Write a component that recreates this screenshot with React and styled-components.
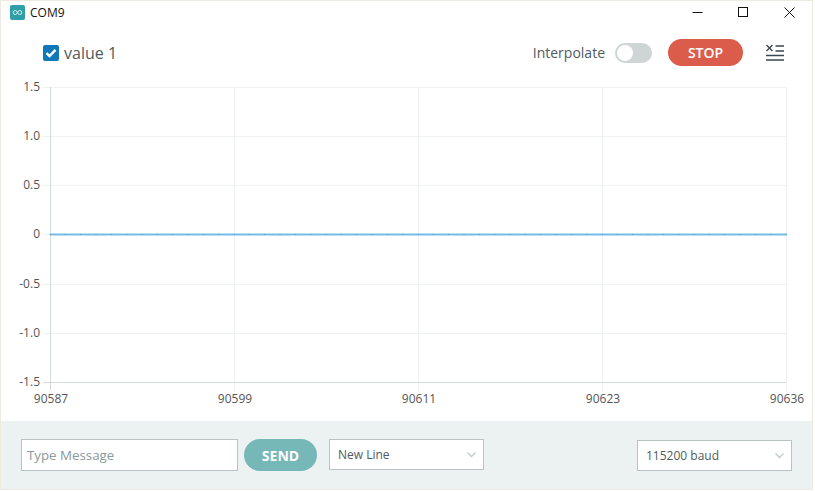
import React from "react";
import styled, { createGlobalStyle } from "styled-components";

const Global = createGlobalStyle`
  html, body { margin: 0; padding: 0; background: #fff; }
  body { font-family: "Open Sans", "Liberation Sans", sans-serif; width: 815px; height: 491px; overflow: hidden; }
  * { box-sizing: border-box; }
`;

const Win = styled.div`
  width: 813px;
  height: 490px;
  border: 1px solid #ecebdf;
  background: #fff;
  display: flex;
  flex-direction: column;
`;
const TitleBar = styled.div`
  height: 23px;
  display: flex;
  align-items: center;
  padding-left: 9px;
  color: #111;
  font-size: 12px;
`;
const AppIcon = styled.svg`
  width: 15px;
  height: 15px;
  margin-right: 5px;
`;
const WinControls = styled.div`
  margin-left: auto;
  display: flex;
  padding-right: 17px;
  gap: 35px;
`;
const WinIcon = styled.svg`
  width: 11px;
  height: 11px;
  display: block;
  stroke: #111;
  fill: none;
`;
const Toolbar = styled.div`
  height: 57px;
  display: flex;
  align-items: center;
  padding: 0 28px 0 42px;
`;
const Check = styled.span`
  width: 16px;
  height: 16px;
  border-radius: 2px;
  background: #1078b8;
  display: flex;
  align-items: center;
  justify-content: center;
  margin-right: 5px;
`;
const SeriesLabel = styled.span`
  font-size: 16px;
  color: #4f5b62;
`;
const Interp = styled.span`
  margin-left: auto;
  font-size: 14px;
  color: #4f5b62;
  margin-right: 10px;
`;
const Toggle = styled.span`
  width: 37px;
  height: 20px;
  border-radius: 10px;
  background: #ced5d4;
  padding: 2px;
  margin-right: 16px;
  display: flex;
`;
const Knob = styled.span`
  width: 16px;
  height: 16px;
  border-radius: 50%;
  background: #fff;
`;
const Pill = styled.button`
  border: none;
  font-family: inherit;
  font-weight: ${(p) => p.$fw};
  color: #fff;
  padding: 0;
  height: ${(p) => p.$h}px;
  width: ${(p) => p.$w}px;
  border-radius: ${(p) => p.$h / 2}px;
  background: ${(p) => p.$bg};
  font-size: ${(p) => p.$fs}px;
`;
const MenuIcon = styled.svg`
  width: 18px;
  height: 18px;
  margin-left: 23px;
  stroke: #39474f;
  stroke-width: 1.4;
  fill: none;
`;
const ChartSvg = styled.svg`
  display: block;
  width: 811px;
  height: 340px;
  overflow: visible;
  font-family: "Open Sans", "Liberation Sans", sans-serif;
  font-size: 12px;
`;
const Footer = styled.div`
  flex: 1;
  background: #ecf1f1;
  display: flex;
  align-items: flex-start;
  padding: 18px 20px 0 20px;
`;
const Input = styled.input`
  width: 217px;
  height: 32px;
  border: 1px solid #bac3c3;
  background: #fff;
  padding: 0 5px;
  font-family: inherit;
  font-size: 13.3px;
  margin-right: 6px;
  outline: none;
  &::placeholder { color: #8a9a9d; opacity: 1; }
`;
const Select = styled.div`
  width: 155px;
  height: 31px;
  border: 1px solid #bac3c3;
  background: #fff;
  font-size: 12px;
  color: #4f5b62;
  display: flex;
  align-items: center;
  justify-content: space-between;
  padding: 0 7px 0 8px;
  margin-left: ${(p) => p.$ml || 0}px;
  margin-top: ${(p) => p.$mt || 0}px;
`;
const Chev = styled.svg`
  width: 9px;
  height: 6px;
  stroke: #c2caca;
  stroke-width: 1.3;
  fill: none;
`;

const yTicks = [
  ["1.5", 87], ["1.0", 136], ["0.5", 185], ["0", 234], ["-0.5", 284], ["-1.0", 333], ["-1.5", 382],
];
const xTicks = [["90587", 50], ["90599", 234], ["90611", 418], ["90623", 602], ["90636", 786]];
const dots = Array.from({ length: 49 }, (_, i) => 50 + (i * 736) / 48);

function PlotChart() {
  return (
    <ChartSvg viewBox="1 81 811 340" xmlns="http://www.w3.org/2000/svg">
      {yTicks.map(([t, y]) => (
        <g key={t}>
          <line x1="43" x2="786" y1={y + 0.5} y2={y + 0.5} stroke={t === "-1.5" ? "#d5dada" : "#f0f2f2"} />
          <text x="40" y={y + 4} textAnchor="end" fill="#555">{t}</text>
        </g>
      ))}
      {xTicks.map(([t, x]) => (
        <g key={t}>
          <line x1={x + 0.5} x2={x + 0.5} y1="87" y2="390" stroke={x === 50 ? "#d5dada" : "#eef1f1"} />
          <text x={x + 1} y="403" textAnchor="middle" fill="#555">{t}</text>
        </g>
      ))}
      <line x1="50" x2="787" y1="234.5" y2="234.5" stroke="#74bbe6" strokeWidth="2" />
      {dots.map((x) => (
        <circle key={x} cx={x} cy="234.5" r="0.6" fill="#4a9cc9" />
      ))}
    </ChartSvg>
  );
}

export default function App() {
  return (
    <>
      <Global />
      <Win>
        <TitleBar>
          <AppIcon viewBox="0 0 15 15">
            <rect width="15" height="15" rx="2" fill="#2f9ea6" />
            <circle cx="5.2" cy="7.5" r="2" fill="none" stroke="#d5eef0" strokeWidth="1" />
            <circle cx="9.8" cy="7.5" r="2" fill="none" stroke="#d5eef0" strokeWidth="1" />
          </AppIcon>
          COM9
          <WinControls>
            <WinIcon viewBox="0 0 11 11"><path d="M0.5 5.5H10.5" /></WinIcon>
            <WinIcon viewBox="0 0 11 11"><rect x="0.5" y="0.5" width="9" height="9" /></WinIcon>
            <WinIcon viewBox="0 0 11 11"><path d="M0.5 0.5L10.5 10.5M10.5 0.5L0.5 10.5" /></WinIcon>
          </WinControls>
        </TitleBar>
        <Toolbar>
          <Check>
            <svg width="12" height="10" viewBox="0 0 12 10">
              <path d="M1.5 5.2L4.5 8L10.5 1.8" stroke="#fff" strokeWidth="2.4" fill="none" />
            </svg>
          </Check>
          <SeriesLabel>value 1</SeriesLabel>
          <Interp>Interpolate</Interp>
          <Toggle><Knob /></Toggle>
          <Pill $w={75} $h={27} $bg="#dc5c4b" $fs={14} $fw={600}>STOP</Pill>
          <MenuIcon viewBox="0 0 18 18">
            <path d="M9.5 2H18M9.5 7H18M0 11.5H18M0 16H18M0.5 1L6.5 7M6.5 1L0.5 7" />
          </MenuIcon>
        </Toolbar>
        <PlotChart />
        <Footer>
          <Input placeholder="Type Message" />
          <Pill $w={73} $h={32} $bg="#76b7b8" $fs={14} $fw={700}>SEND</Pill>
          <Select $ml={12}>New Line<Chev viewBox="0 0 9 6"><path d="M0.5 0.5L4.5 4.5L8.5 0.5" /></Chev></Select>
          <Select $ml={153} $mt={1}>115200 baud<Chev viewBox="0 0 9 6"><path d="M0.5 0.5L4.5 4.5L8.5 0.5" /></Chev></Select>
        </Footer>
      </Win>
    </>
  );
}
